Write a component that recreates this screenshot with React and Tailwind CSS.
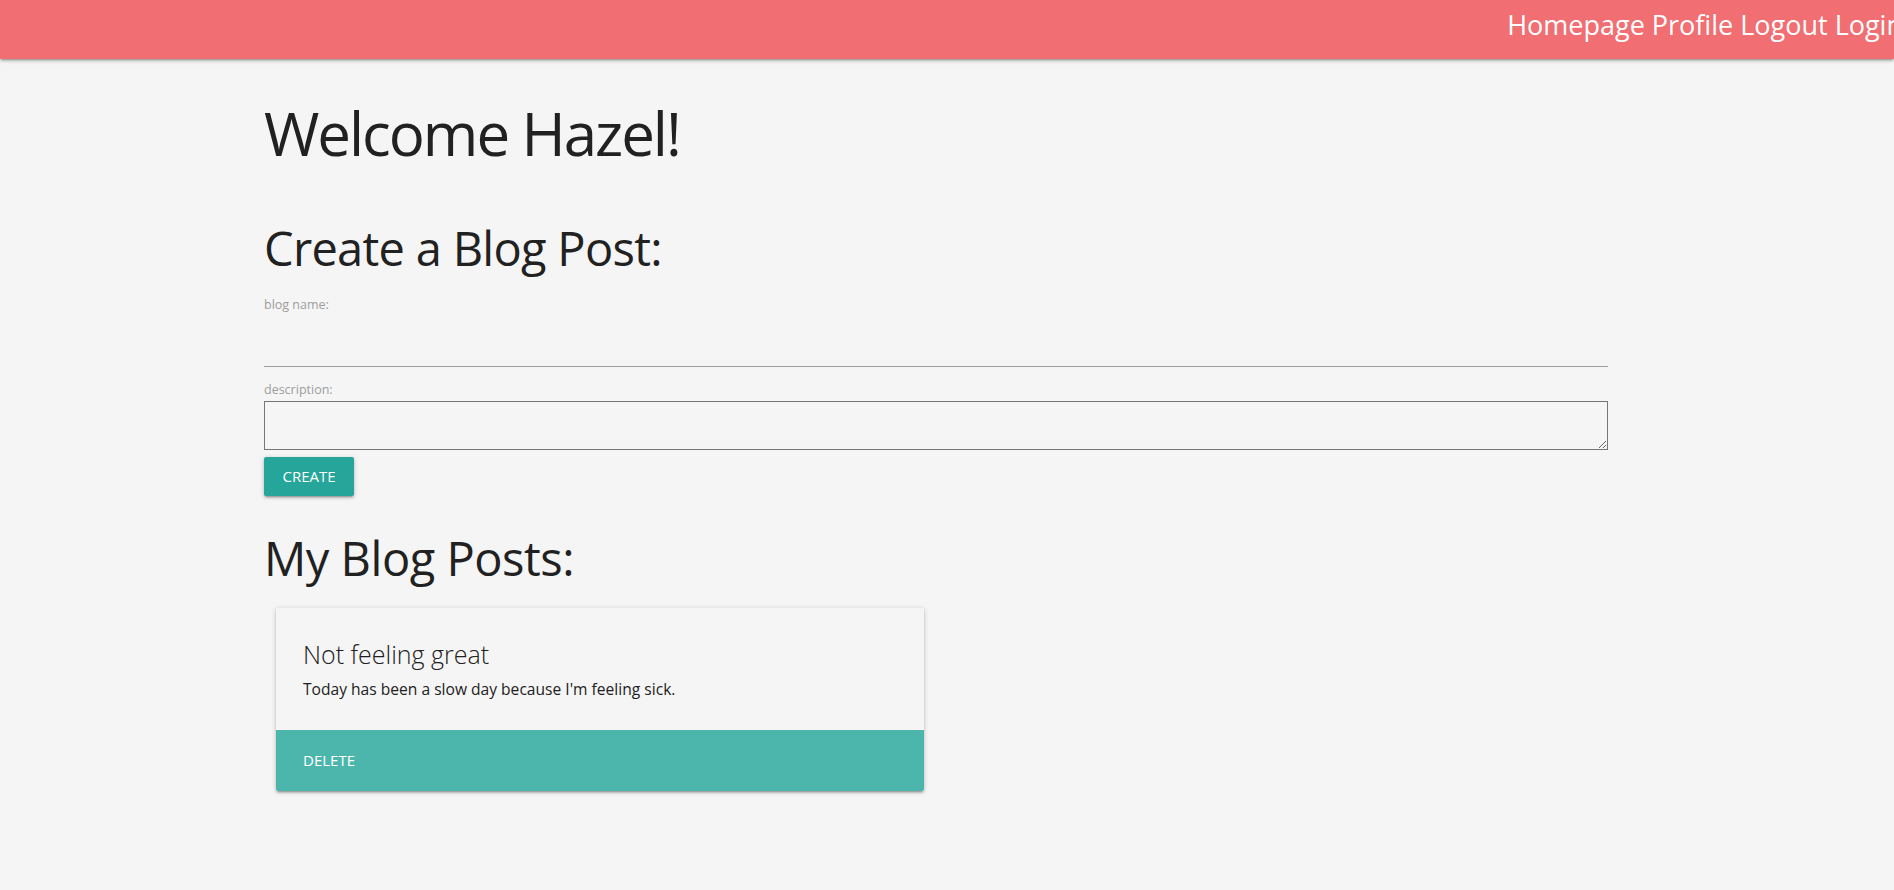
import React, { useState } from "react";

const shadow =
  "shadow-[0_2px_2px_0_rgba(0,0,0,0.14),0_3px_1px_-2px_rgba(0,0,0,0.12),0_1px_5px_0_rgba(0,0,0,0.2)]";

const Navbar = () => {
  return (
    <nav className={`h-[59px] pb-[9px] bg-[#f16e73] flex justify-end items-center overflow-hidden relative z-10 ${shadow}`}>
      <ul className="flex gap-[7px] whitespace-nowrap text-white text-[27px] leading-[36px] -mr-[9px]">
        <li><a href="#">Homepage</a></li>
        <li><a href="#">Profile</a></li>
        <li><a href="#">Logout</a></li>
        <li><a href="#">Login</a></li>
      </ul>
    </nav>
  );
};

const PostCard = ({ post, onDelete }) => {
  return (
    <div className={`ml-[12px] w-[648px] bg-[#f5f5f5] rounded-[2px] overflow-hidden ${shadow}`}>
      <div className="h-[122px] px-[27px] pt-[28px]">
        <h3 className="text-[25px] font-light leading-[36px] text-[#212121]">{post.name}</h3>
        <p className="mt-[6px] text-[15.6px] leading-[22px] text-[#212121]">{post.description}</p>
      </div>
      <div className="h-[61px] bg-[#4db6ac] px-[27px] flex items-center">
        <button onClick={onDelete} className="text-white text-[15px] uppercase">
          Delete
        </button>
      </div>
    </div>
  );
};

const App = () => {
  const [detail, setDetail] = useState({ name: "", description: "" });
  const [posts, setPosts] = useState([
    { id: 1, name: "Not feeling great", description: "Today has been a slow day because I'm feeling sick." },
  ]);

  function handleChange(event) {
    setDetail({ ...detail, [event.target.name]: event.target.value });
  }

  function createPost() {
    if (detail.name === "") return;
    setPosts([...posts, { id: Date.now(), ...detail }]);
    setDetail({ name: "", description: "" });
  }

  return (
    <div className="min-h-screen bg-[#f5f5f5] text-[#212121]" style={{ fontFamily: '"Open Sans", "Noto Sans", sans-serif' }}>
      <Navbar />

      <main className="ml-[264px] w-[1344px] pb-10">
        <h1 className="mt-[38px] text-[60px] leading-[72px] tracking-[-0.034em]">Welcome Hazel!</h1>

        <h2 className="mt-[51px] text-[47px] leading-[56px] tracking-[-0.015em]">Create a Blog Post:</h2>

        {/* blog name */}
        <label htmlFor="name" className="block mt-[21px] text-[12.5px] leading-[16px] text-[#9e9e9e]">
          blog name:
        </label>
        <input
          id="name"
          name="name"
          type="text"
          value={detail.name}
          onChange={handleChange}
          className="block w-full h-[54px] bg-transparent border-b border-[#9e9e9e] outline-none text-[16px]"
        />

        {/* description */}
        <label htmlFor="description" className="block mt-[15px] text-[12.5px] leading-[16px] text-[#9e9e9e]">
          description:
        </label>
        <textarea
          id="description"
          name="description"
          value={detail.description}
          onChange={handleChange}
          className="block mt-[3px] w-full h-[49px] bg-transparent border border-[#767676] outline-none"
        />

        <button
          onClick={createPost}
          className={`mt-[7px] w-[90px] h-[39px] rounded-[2px] bg-[#26a69a] text-white text-[15px] uppercase ${shadow}`}
        >
          Create
        </button>

        <h2 className="mt-[34px] text-[47px] leading-[56px] tracking-[-0.01em]">My Blog Posts:</h2>

        <div className="mt-[22px] flex flex-col gap-4">
          {posts.map((post) => (
            <PostCard key={post.id} post={post} onDelete={() => setPosts(posts.filter((p) => p.id !== post.id))} />
          ))}
        </div>
      </main>
    </div>
  );
};

export default App;
